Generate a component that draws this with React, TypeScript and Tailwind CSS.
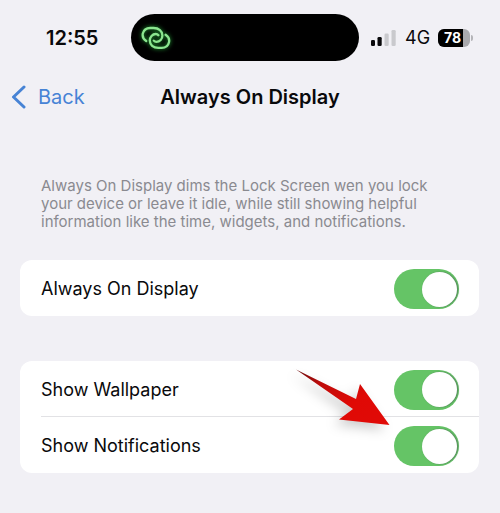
import { useState } from "react";

function StatusBar() {
  return (
    <div className="flex h-[47px] items-center">
      <div className="w-[131px] pl-[46px] text-[20px] leading-6 font-semibold">12:55</div>
      <div className="flex h-[47px] flex-1 items-center rounded-full bg-black pl-[10px]">
        <svg width="30" height="26" viewBox="0 0 30 26" fill="none" stroke="#8be58f" strokeWidth="2.3" strokeLinecap="round" className="drop-shadow-[0_0_2px_#22a637]" aria-hidden="true">
          <path d="M5.2 16C2.6 14.2 1.2 11.4 1.8 8.6C2.6 5 5.4 3 9.2 3H12.6C17.8 3 21.4 6.2 21.4 10.4C21.4 14 18.8 16.8 15.4 16.8C14.2 16.8 13.4 16.4 12.8 15.6" />
          <path d="M24.6 9.8C27.4 11.6 28.6 14.4 28 17.2C27.2 20.8 24.4 22.8 20.8 22.8H17.4C12.2 22.8 8.8 19.8 8.8 15.6C8.8 12 11.4 9 14.8 9C16 9 16.8 9.4 17.4 10.2" />
        </svg>
      </div>
      <div className="flex w-[141px] items-center pl-3">
        <svg width="26" height="16" viewBox="0 0 26 16" aria-hidden="true">
          <rect x="0" y="10" width="4" height="6" rx="1.3" fill="#09090b" />
          <rect x="6.5" y="7" width="4.2" height="9" rx="1.3" fill="#09090b" />
          <rect x="13.5" y="3.5" width="4.2" height="12.5" rx="1.3" fill="#c9c9cd" />
          <rect x="20.5" y="0" width="4.2" height="16" rx="1.3" fill="#c9c9cd" />
        </svg>
        <span className="ml-2 w-[26px] text-[18px] leading-6 whitespace-nowrap">4G</span>
        <div className="ml-[7px] flex items-center gap-px">
          <div className="flex h-[18px] w-8 items-center overflow-hidden rounded-md bg-[#a9a9ad]">
            <div className="h-full w-[25px] bg-black pl-[6px] text-[14px] leading-[18px] font-bold whitespace-nowrap text-white">78</div>
          </div>
          <div className="h-[6px] w-[2px] rounded-r-full bg-[#b4b4b8]" />
        </div>
      </div>
    </div>
  );
}

function SettingRow({ id, label }: { id: string; label: string }) {
  const [on, setOn] = useState(true);
  return (
    <div className="flex h-14 items-center justify-between pt-0.5 pr-5">
      <label htmlFor={id} className="text-[18px] leading-6">{label}</label>
      <input
        id={id}
        type="checkbox"
        role="switch"
        checked={on}
        onChange={(e) => setOn(e.target.checked)}
        className="flex h-10 w-[65px] shrink-0 cursor-pointer appearance-none items-center rounded-full bg-[#d5d5d9] px-[2px] before:h-[35px] before:w-[35px] before:rounded-full before:bg-white before:shadow-[1px_0_2px_#52805a] before:content-[''] checked:justify-end checked:bg-[#65c466]"
      />
    </div>
  );
}

function PointerArrow() {
  return (
    <svg width="104" height="66" viewBox="0 0 104 66" className="pointer-events-none absolute top-1 right-20 overflow-visible drop-shadow-[-5px_5px_6px_rgba(0,0,0,0.2)]" aria-hidden="true">
      <defs>
        <linearGradient id="arrow-red" x1="0" y1="0" x2="1" y2="1">
          <stop offset="0" stopColor="#650b0b" />
          <stop offset="0.25" stopColor="#bd0c0b" />
          <stop offset="0.6" stopColor="#e00905" />
          <stop offset="1" stopColor="#e00b08" />
        </linearGradient>
      </defs>
      <path d="M1 4.5L61 34L65 19L94.5 60L44 54.5L58 44Z" fill="url(#arrow-red)" />
    </svg>
  );
}

export default function App() {
  return (
    <main className="min-h-screen bg-[#f1f0f5] pt-[14px] font-['Inter','Liberation_Sans',sans-serif] text-[#09090b]">
      <StatusBar />
      <header className="mt-[22px] grid h-7 grid-cols-[1fr_auto_1fr] items-center">
        <button type="button" className="flex items-center gap-3 pl-[11px] text-[20px] leading-7 text-[#4783d5]">
          <svg width="15" height="24" viewBox="0 0 15 24" fill="none" stroke="currentColor" strokeWidth="3" strokeLinecap="round" strokeLinejoin="round" aria-hidden="true">
            <path d="M13 2L2.5 12L13 22" />
          </svg>
          Back
        </button>
        <h1 className="text-[20px] leading-7 font-semibold">Always On Display</h1>
      </header>
      <p className="mt-[66px] px-[41px] text-[15px] leading-[18px] text-[#8a8a90]">
        Always On Display dims the Lock Screen wen you lock<br />
        your device or leave it idle, while still showing helpful<br />
        information like the time, widgets, and notifications.
      </p>
      <section className="mr-[21px] ml-5 mt-[29px] rounded-xl bg-white pl-[21px]">
        <SettingRow id="always-on" label="Always On Display" />
      </section>
      <section className="relative mr-[21px] ml-5 mt-[45px] rounded-xl bg-white pl-[21px]">
        <div className="divide-y divide-[#e2e2e5]">
          <SettingRow id="wallpaper" label="Show Wallpaper" />
          <SettingRow id="notifications" label="Show Notifications" />
        </div>
        <PointerArrow />
      </section>
    </main>
  );
}
